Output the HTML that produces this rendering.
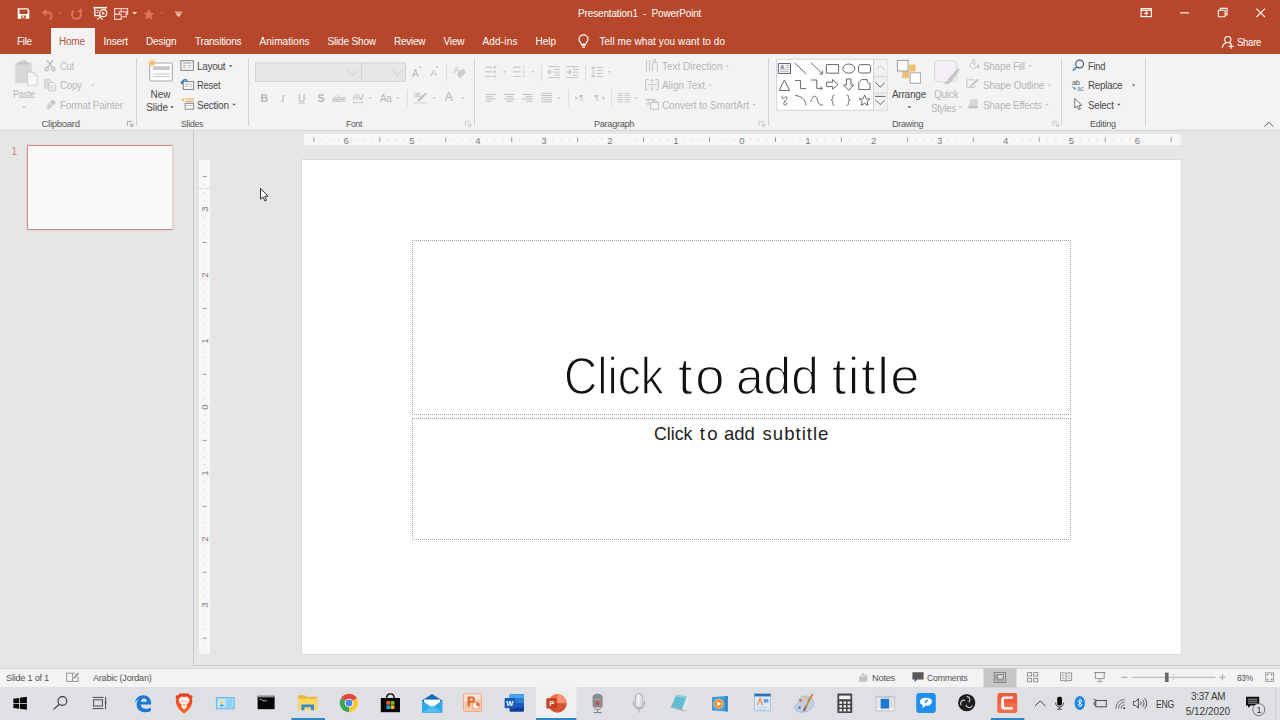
<!DOCTYPE html>
<html lang="en">
<head>
<meta charset="utf-8">
<title>Presentation1 - PowerPoint</title>
<style>
*{box-sizing:border-box;margin:0;padding:0}
html,body{width:1280px;height:720px;overflow:hidden;background:#e6e6e6;font-family:"Liberation Sans",sans-serif;font-size:10px;color:#444}
#app{position:absolute;left:0;top:0;width:1280px;height:720px;overflow:hidden}
.b{position:absolute}
.t{position:absolute;white-space:pre;line-height:1;font-family:"Liberation Sans",sans-serif}
svg.layer{position:absolute;left:0;top:0;width:1280px;height:720px;overflow:visible}
#titlebar{left:0;top:0;width:1280px;height:54px;background:#b7472a}
#hometab{left:50.5px;top:28.4px;width:44.5px;height:27px;background:#f3f3f3}
#ribbon{left:0;top:54px;width:1280px;height:76px;background:#f3f3f3}
#ribbonline{left:0;top:129px;width:1280px;height:2px;background:linear-gradient(#ececec 0,#ececec 50%,#d8d8d8 50%,#d8d8d8 100%)}
#work{left:0;top:131px;width:1280px;height:538px;background:#e6e6e6}
#status{left:0;top:669px;width:1280px;height:19px;background:#f3f3f3}
#taskbar{left:0;top:687px;width:1280px;height:33px;background:#dfe0e3}
.gsep{position:absolute;top:58px;width:1px;height:68px;background:#d0d0d0}
.grp{position:absolute;left:0;top:0;width:0;height:0;font-size:0}
.ph{border:1px dotted #a3a3a3}
.ssep{position:absolute;width:1px;background:#dcdcdc}
</style>
</head>
<body>
<div id="app">

<!-- ============ backgrounds ============ -->
<div class="b" id="titlebar"></div>
<div class="b" id="hometab"></div>
<div class="b" id="ribbon"></div>
<div class="b" id="ribbonline"></div>
<div class="b" id="work"></div>
<div class="b" id="status"></div>
<div class="b" id="taskbar"></div>

<!-- ============ work area ============ -->
<div class="b" style="left:193px;top:131px;width:1px;height:535px;background:#cacaca"></div>
<div class="b" style="left:194px;top:665px;width:1086px;height:1px;background:#cbcbcb"></div>
<div class="b" style="left:0;top:668px;width:1280px;height:1px;background:#d9d9d9"></div>
<div class="b" style="left:27.3px;top:145px;width:146.2px;height:85.4px;background:#fafafa;border:1.8px solid #d98a83;border-right-color:#f0cfcb;box-shadow:0 0 1.5px #e6b5b0"></div>
<div class="b" style="left:304px;top:134px;width:877px;height:11px;background:#f7f7f7"></div>
<div class="b" style="left:199px;top:160px;width:11px;height:494px;background:#f7f7f7"></div>
<div class="b" id="slide" style="left:301px;top:159px;width:881px;height:496px;background:#fff;border:1px solid #dadada"></div>
<svg class="layer" viewBox="0 0 1280 720">
<g stroke="#9a9a9a" stroke-width="1" fill="#a8a8a8">
<line x1="313.8" y1="137.4" x2="313.8" y2="141.9"/>
<rect x="321.5" y="139.3" width="0.9" height="0.9" stroke="none" fill="#bdbdbd"/>
<rect x="329.7" y="139.3" width="0.9" height="0.9" stroke="none" fill="#bdbdbd"/>
<rect x="338.0" y="139.3" width="0.9" height="0.9" stroke="none" fill="#bdbdbd"/>
<rect x="354.4" y="139.3" width="0.9" height="0.9" stroke="none" fill="#bdbdbd"/>
<rect x="362.7" y="139.3" width="0.9" height="0.9" stroke="none" fill="#bdbdbd"/>
<rect x="370.9" y="139.3" width="0.9" height="0.9" stroke="none" fill="#bdbdbd"/>
<line x1="379.8" y1="137.4" x2="379.8" y2="141.9"/>
<rect x="387.4" y="139.3" width="0.9" height="0.9" stroke="none" fill="#bdbdbd"/>
<rect x="395.7" y="139.3" width="0.9" height="0.9" stroke="none" fill="#bdbdbd"/>
<rect x="403.9" y="139.3" width="0.9" height="0.9" stroke="none" fill="#bdbdbd"/>
<rect x="420.4" y="139.3" width="0.9" height="0.9" stroke="none" fill="#bdbdbd"/>
<rect x="428.6" y="139.3" width="0.9" height="0.9" stroke="none" fill="#bdbdbd"/>
<rect x="436.9" y="139.3" width="0.9" height="0.9" stroke="none" fill="#bdbdbd"/>
<line x1="445.7" y1="137.4" x2="445.7" y2="141.9"/>
<rect x="453.4" y="139.3" width="0.9" height="0.9" stroke="none" fill="#bdbdbd"/>
<rect x="461.6" y="139.3" width="0.9" height="0.9" stroke="none" fill="#bdbdbd"/>
<rect x="469.9" y="139.3" width="0.9" height="0.9" stroke="none" fill="#bdbdbd"/>
<rect x="486.3" y="139.3" width="0.9" height="0.9" stroke="none" fill="#bdbdbd"/>
<rect x="494.6" y="139.3" width="0.9" height="0.9" stroke="none" fill="#bdbdbd"/>
<rect x="502.8" y="139.3" width="0.9" height="0.9" stroke="none" fill="#bdbdbd"/>
<line x1="511.7" y1="137.4" x2="511.7" y2="141.9"/>
<rect x="519.3" y="139.3" width="0.9" height="0.9" stroke="none" fill="#bdbdbd"/>
<rect x="527.6" y="139.3" width="0.9" height="0.9" stroke="none" fill="#bdbdbd"/>
<rect x="535.8" y="139.3" width="0.9" height="0.9" stroke="none" fill="#bdbdbd"/>
<rect x="552.3" y="139.3" width="0.9" height="0.9" stroke="none" fill="#bdbdbd"/>
<rect x="560.5" y="139.3" width="0.9" height="0.9" stroke="none" fill="#bdbdbd"/>
<rect x="568.8" y="139.3" width="0.9" height="0.9" stroke="none" fill="#bdbdbd"/>
<line x1="577.6" y1="137.4" x2="577.6" y2="141.9"/>
<rect x="585.3" y="139.3" width="0.9" height="0.9" stroke="none" fill="#bdbdbd"/>
<rect x="593.5" y="139.3" width="0.9" height="0.9" stroke="none" fill="#bdbdbd"/>
<rect x="601.8" y="139.3" width="0.9" height="0.9" stroke="none" fill="#bdbdbd"/>
<rect x="618.2" y="139.3" width="0.9" height="0.9" stroke="none" fill="#bdbdbd"/>
<rect x="626.5" y="139.3" width="0.9" height="0.9" stroke="none" fill="#bdbdbd"/>
<rect x="634.7" y="139.3" width="0.9" height="0.9" stroke="none" fill="#bdbdbd"/>
<line x1="643.6" y1="137.4" x2="643.6" y2="141.9"/>
<rect x="651.2" y="139.3" width="0.9" height="0.9" stroke="none" fill="#bdbdbd"/>
<rect x="659.5" y="139.3" width="0.9" height="0.9" stroke="none" fill="#bdbdbd"/>
<rect x="667.7" y="139.3" width="0.9" height="0.9" stroke="none" fill="#bdbdbd"/>
<rect x="684.2" y="139.3" width="0.9" height="0.9" stroke="none" fill="#bdbdbd"/>
<rect x="692.4" y="139.3" width="0.9" height="0.9" stroke="none" fill="#bdbdbd"/>
<rect x="700.7" y="139.3" width="0.9" height="0.9" stroke="none" fill="#bdbdbd"/>
<line x1="709.5" y1="137.4" x2="709.5" y2="141.9"/>
<rect x="717.2" y="139.3" width="0.9" height="0.9" stroke="none" fill="#bdbdbd"/>
<rect x="725.4" y="139.3" width="0.9" height="0.9" stroke="none" fill="#bdbdbd"/>
<rect x="733.7" y="139.3" width="0.9" height="0.9" stroke="none" fill="#bdbdbd"/>
<rect x="750.1" y="139.3" width="0.9" height="0.9" stroke="none" fill="#bdbdbd"/>
<rect x="758.4" y="139.3" width="0.9" height="0.9" stroke="none" fill="#bdbdbd"/>
<rect x="766.6" y="139.3" width="0.9" height="0.9" stroke="none" fill="#bdbdbd"/>
<line x1="775.5" y1="137.4" x2="775.5" y2="141.9"/>
<rect x="783.1" y="139.3" width="0.9" height="0.9" stroke="none" fill="#bdbdbd"/>
<rect x="791.4" y="139.3" width="0.9" height="0.9" stroke="none" fill="#bdbdbd"/>
<rect x="799.6" y="139.3" width="0.9" height="0.9" stroke="none" fill="#bdbdbd"/>
<rect x="816.1" y="139.3" width="0.9" height="0.9" stroke="none" fill="#bdbdbd"/>
<rect x="824.3" y="139.3" width="0.9" height="0.9" stroke="none" fill="#bdbdbd"/>
<rect x="832.6" y="139.3" width="0.9" height="0.9" stroke="none" fill="#bdbdbd"/>
<line x1="841.4" y1="137.4" x2="841.4" y2="141.9"/>
<rect x="849.1" y="139.3" width="0.9" height="0.9" stroke="none" fill="#bdbdbd"/>
<rect x="857.3" y="139.3" width="0.9" height="0.9" stroke="none" fill="#bdbdbd"/>
<rect x="865.6" y="139.3" width="0.9" height="0.9" stroke="none" fill="#bdbdbd"/>
<rect x="882.0" y="139.3" width="0.9" height="0.9" stroke="none" fill="#bdbdbd"/>
<rect x="890.3" y="139.3" width="0.9" height="0.9" stroke="none" fill="#bdbdbd"/>
<rect x="898.5" y="139.3" width="0.9" height="0.9" stroke="none" fill="#bdbdbd"/>
<line x1="907.4" y1="137.4" x2="907.4" y2="141.9"/>
<rect x="915.0" y="139.3" width="0.9" height="0.9" stroke="none" fill="#bdbdbd"/>
<rect x="923.3" y="139.3" width="0.9" height="0.9" stroke="none" fill="#bdbdbd"/>
<rect x="931.5" y="139.3" width="0.9" height="0.9" stroke="none" fill="#bdbdbd"/>
<rect x="948.0" y="139.3" width="0.9" height="0.9" stroke="none" fill="#bdbdbd"/>
<rect x="956.2" y="139.3" width="0.9" height="0.9" stroke="none" fill="#bdbdbd"/>
<rect x="964.5" y="139.3" width="0.9" height="0.9" stroke="none" fill="#bdbdbd"/>
<line x1="973.3" y1="137.4" x2="973.3" y2="141.9"/>
<rect x="981.0" y="139.3" width="0.9" height="0.9" stroke="none" fill="#bdbdbd"/>
<rect x="989.2" y="139.3" width="0.9" height="0.9" stroke="none" fill="#bdbdbd"/>
<rect x="997.5" y="139.3" width="0.9" height="0.9" stroke="none" fill="#bdbdbd"/>
<rect x="1013.9" y="139.3" width="0.9" height="0.9" stroke="none" fill="#bdbdbd"/>
<rect x="1022.2" y="139.3" width="0.9" height="0.9" stroke="none" fill="#bdbdbd"/>
<rect x="1030.4" y="139.3" width="0.9" height="0.9" stroke="none" fill="#bdbdbd"/>
<line x1="1039.3" y1="137.4" x2="1039.3" y2="141.9"/>
<rect x="1046.9" y="139.3" width="0.9" height="0.9" stroke="none" fill="#bdbdbd"/>
<rect x="1055.2" y="139.3" width="0.9" height="0.9" stroke="none" fill="#bdbdbd"/>
<rect x="1063.4" y="139.3" width="0.9" height="0.9" stroke="none" fill="#bdbdbd"/>
<rect x="1079.9" y="139.3" width="0.9" height="0.9" stroke="none" fill="#bdbdbd"/>
<rect x="1088.1" y="139.3" width="0.9" height="0.9" stroke="none" fill="#bdbdbd"/>
<rect x="1096.4" y="139.3" width="0.9" height="0.9" stroke="none" fill="#bdbdbd"/>
<line x1="1105.2" y1="137.4" x2="1105.2" y2="141.9"/>
<rect x="1112.9" y="139.3" width="0.9" height="0.9" stroke="none" fill="#bdbdbd"/>
<rect x="1121.1" y="139.3" width="0.9" height="0.9" stroke="none" fill="#bdbdbd"/>
<rect x="1129.4" y="139.3" width="0.9" height="0.9" stroke="none" fill="#bdbdbd"/>
<rect x="1145.8" y="139.3" width="0.9" height="0.9" stroke="none" fill="#bdbdbd"/>
<rect x="1154.1" y="139.3" width="0.9" height="0.9" stroke="none" fill="#bdbdbd"/>
<rect x="1162.3" y="139.3" width="0.9" height="0.9" stroke="none" fill="#bdbdbd"/>
<line x1="1171.2" y1="137.4" x2="1171.2" y2="141.9"/>
<rect x="1178.8" y="139.3" width="0.9" height="0.9" stroke="none" fill="#bdbdbd"/>
<rect x="204.1" y="167.5" width="0.9" height="0.9" stroke="none" fill="#bdbdbd"/>
<line x1="202.6" y1="176.6" x2="206.8" y2="176.6"/>
<rect x="204.1" y="184.0" width="0.9" height="0.9" stroke="none" fill="#bdbdbd"/>
<rect x="204.1" y="192.2" width="0.9" height="0.9" stroke="none" fill="#bdbdbd"/>
<rect x="204.1" y="200.5" width="0.9" height="0.9" stroke="none" fill="#bdbdbd"/>
<rect x="204.1" y="216.9" width="0.9" height="0.9" stroke="none" fill="#bdbdbd"/>
<rect x="204.1" y="225.2" width="0.9" height="0.9" stroke="none" fill="#bdbdbd"/>
<rect x="204.1" y="233.4" width="0.9" height="0.9" stroke="none" fill="#bdbdbd"/>
<line x1="202.6" y1="242.5" x2="206.8" y2="242.5"/>
<rect x="204.1" y="249.9" width="0.9" height="0.9" stroke="none" fill="#bdbdbd"/>
<rect x="204.1" y="258.2" width="0.9" height="0.9" stroke="none" fill="#bdbdbd"/>
<rect x="204.1" y="266.4" width="0.9" height="0.9" stroke="none" fill="#bdbdbd"/>
<rect x="204.1" y="282.9" width="0.9" height="0.9" stroke="none" fill="#bdbdbd"/>
<rect x="204.1" y="291.1" width="0.9" height="0.9" stroke="none" fill="#bdbdbd"/>
<rect x="204.1" y="299.4" width="0.9" height="0.9" stroke="none" fill="#bdbdbd"/>
<line x1="202.6" y1="308.5" x2="206.8" y2="308.5"/>
<rect x="204.1" y="315.9" width="0.9" height="0.9" stroke="none" fill="#bdbdbd"/>
<rect x="204.1" y="324.1" width="0.9" height="0.9" stroke="none" fill="#bdbdbd"/>
<rect x="204.1" y="332.4" width="0.9" height="0.9" stroke="none" fill="#bdbdbd"/>
<rect x="204.1" y="348.8" width="0.9" height="0.9" stroke="none" fill="#bdbdbd"/>
<rect x="204.1" y="357.1" width="0.9" height="0.9" stroke="none" fill="#bdbdbd"/>
<rect x="204.1" y="365.3" width="0.9" height="0.9" stroke="none" fill="#bdbdbd"/>
<line x1="202.6" y1="374.4" x2="206.8" y2="374.4"/>
<rect x="204.1" y="381.8" width="0.9" height="0.9" stroke="none" fill="#bdbdbd"/>
<rect x="204.1" y="390.1" width="0.9" height="0.9" stroke="none" fill="#bdbdbd"/>
<rect x="204.1" y="398.3" width="0.9" height="0.9" stroke="none" fill="#bdbdbd"/>
<rect x="204.1" y="414.8" width="0.9" height="0.9" stroke="none" fill="#bdbdbd"/>
<rect x="204.1" y="423.0" width="0.9" height="0.9" stroke="none" fill="#bdbdbd"/>
<rect x="204.1" y="431.3" width="0.9" height="0.9" stroke="none" fill="#bdbdbd"/>
<line x1="202.6" y1="440.4" x2="206.8" y2="440.4"/>
<rect x="204.1" y="447.8" width="0.9" height="0.9" stroke="none" fill="#bdbdbd"/>
<rect x="204.1" y="456.0" width="0.9" height="0.9" stroke="none" fill="#bdbdbd"/>
<rect x="204.1" y="464.3" width="0.9" height="0.9" stroke="none" fill="#bdbdbd"/>
<rect x="204.1" y="480.7" width="0.9" height="0.9" stroke="none" fill="#bdbdbd"/>
<rect x="204.1" y="489.0" width="0.9" height="0.9" stroke="none" fill="#bdbdbd"/>
<rect x="204.1" y="497.2" width="0.9" height="0.9" stroke="none" fill="#bdbdbd"/>
<line x1="202.6" y1="506.3" x2="206.8" y2="506.3"/>
<rect x="204.1" y="513.7" width="0.9" height="0.9" stroke="none" fill="#bdbdbd"/>
<rect x="204.1" y="522.0" width="0.9" height="0.9" stroke="none" fill="#bdbdbd"/>
<rect x="204.1" y="530.2" width="0.9" height="0.9" stroke="none" fill="#bdbdbd"/>
<rect x="204.1" y="546.7" width="0.9" height="0.9" stroke="none" fill="#bdbdbd"/>
<rect x="204.1" y="554.9" width="0.9" height="0.9" stroke="none" fill="#bdbdbd"/>
<rect x="204.1" y="563.2" width="0.9" height="0.9" stroke="none" fill="#bdbdbd"/>
<line x1="202.6" y1="572.3" x2="206.8" y2="572.3"/>
<rect x="204.1" y="579.7" width="0.9" height="0.9" stroke="none" fill="#bdbdbd"/>
<rect x="204.1" y="587.9" width="0.9" height="0.9" stroke="none" fill="#bdbdbd"/>
<rect x="204.1" y="596.2" width="0.9" height="0.9" stroke="none" fill="#bdbdbd"/>
<rect x="204.1" y="612.6" width="0.9" height="0.9" stroke="none" fill="#bdbdbd"/>
<rect x="204.1" y="620.9" width="0.9" height="0.9" stroke="none" fill="#bdbdbd"/>
<rect x="204.1" y="629.1" width="0.9" height="0.9" stroke="none" fill="#bdbdbd"/>
<line x1="202.6" y1="638.2" x2="206.8" y2="638.2"/>
<rect x="204.1" y="645.6" width="0.9" height="0.9" stroke="none" fill="#bdbdbd"/>
</g>
<line x1="197" y1="188.5" x2="211" y2="188.5" stroke="#c9c9c9" stroke-width="1" stroke-dasharray="1.2 1.2"/>
<path d="M260.5 188.3 L260.5 199.2 L263 196.9 L264.9 201 L266.5 200.3 L264.7 196.3 L268 196.2 Z" fill="#fff" stroke="#222" stroke-width="0.9" stroke-linejoin="round"/>
</svg>
<div class="t rd" style="left:341.1px;top:136px;width:10px;text-align:center;font-size:9.5px;color:#787878">6</div>
<div class="t rd" style="left:407.0px;top:136px;width:10px;text-align:center;font-size:9.5px;color:#787878">5</div>
<div class="t rd" style="left:473.0px;top:136px;width:10px;text-align:center;font-size:9.5px;color:#787878">4</div>
<div class="t rd" style="left:538.9px;top:136px;width:10px;text-align:center;font-size:9.5px;color:#787878">3</div>
<div class="t rd" style="left:604.9px;top:136px;width:10px;text-align:center;font-size:9.5px;color:#787878">2</div>
<div class="t rd" style="left:670.8px;top:136px;width:10px;text-align:center;font-size:9.5px;color:#787878">1</div>
<div class="t rd" style="left:736.8px;top:136px;width:10px;text-align:center;font-size:9.5px;color:#787878">0</div>
<div class="t rd" style="left:802.8px;top:136px;width:10px;text-align:center;font-size:9.5px;color:#787878">1</div>
<div class="t rd" style="left:868.7px;top:136px;width:10px;text-align:center;font-size:9.5px;color:#787878">2</div>
<div class="t rd" style="left:934.6px;top:136px;width:10px;text-align:center;font-size:9.5px;color:#787878">3</div>
<div class="t rd" style="left:1000.6px;top:136px;width:10px;text-align:center;font-size:9.5px;color:#787878">4</div>
<div class="t rd" style="left:1066.5px;top:136px;width:10px;text-align:center;font-size:9.5px;color:#787878">5</div>
<div class="t rd" style="left:1132.5px;top:136px;width:10px;text-align:center;font-size:9.5px;color:#787878">6</div>
<div class="t rd" style="left:199.6px;top:204.1px;width:10px;height:10px;text-align:center;font-size:9.5px;color:#787878;transform:rotate(-90deg);transform-origin:50% 50%">3</div>
<div class="t rd" style="left:199.6px;top:270.1px;width:10px;height:10px;text-align:center;font-size:9.5px;color:#787878;transform:rotate(-90deg);transform-origin:50% 50%">2</div>
<div class="t rd" style="left:199.6px;top:336.1px;width:10px;height:10px;text-align:center;font-size:9.5px;color:#787878;transform:rotate(-90deg);transform-origin:50% 50%">1</div>
<div class="t rd" style="left:199.6px;top:402.0px;width:10px;height:10px;text-align:center;font-size:9.5px;color:#787878;transform:rotate(-90deg);transform-origin:50% 50%">0</div>
<div class="t rd" style="left:199.6px;top:467.9px;width:10px;height:10px;text-align:center;font-size:9.5px;color:#787878;transform:rotate(-90deg);transform-origin:50% 50%">1</div>
<div class="t rd" style="left:199.6px;top:533.9px;width:10px;height:10px;text-align:center;font-size:9.5px;color:#787878;transform:rotate(-90deg);transform-origin:50% 50%">2</div>
<div class="t rd" style="left:199.6px;top:599.9px;width:10px;height:10px;text-align:center;font-size:9.5px;color:#787878;transform:rotate(-90deg);transform-origin:50% 50%">3</div>
<div class="b ph" style="left:412px;top:240px;width:659px;height:175px"></div>
<div class="b ph" style="left:412px;top:418px;width:659px;height:122px"></div>


<!-- ============ icon layers ============ -->
<svg class="layer" viewBox="0 0 1280 720" fill="none" stroke-linecap="butt">
<!-- save -->
<path d="M17.7 8.3 H27.6 L29.3 10 V18.7 H17.7 Z" fill="#fff"/>
<rect x="19.5" y="9.5" width="8.1" height="4.5" fill="#b7472a"/>
<rect x="21.3" y="15.4" width="4.6" height="3.3" fill="#b7472a"/>
<rect x="22.6" y="15.4" width="1.6" height="2.2" fill="#fff"/>
<!-- undo (disabled) -->
<path d="M46.4 9 L41.4 12.6 L46.4 16.2 Z" fill="#e0745c"/>
<path d="M45 12.6 H48 C51.6 12.6 52.4 16 50.6 19" stroke="#e0745c" stroke-width="2" stroke-linecap="round"/>
<path d="M58.4 12.2 h3.4 l-1.7 1.9 z" fill="#d9745c"/>
<!-- redo (disabled) -->
<path d="M79.6 11.2 A4.5 4.5 0 1 1 73.8 10.8" stroke="#e0745c" stroke-width="1.8"/>
<path d="M77.4 11.8 L82 12 L81.6 7.8 Z" fill="#e0745c"/>
<!-- start from beginning -->
<g stroke="#fff" stroke-width="1.2">
<path d="M93.3 7.7 H107" stroke-width="1.5"/>
<path d="M94.9 8.4 V15.6 H99.5 M105.1 8.4 V9.6"/>
<path d="M100 15.8 V17.6 M97.2 19.4 L100 17.4 L102.8 19.4" stroke-width="1.1"/>
<circle cx="103.2" cy="13.2" r="3.5" fill="#b7472a"/>
<path d="M102.1 11.5 L105 13.2 L102.1 14.9 Z" fill="#fff" stroke="none"/>
<path d="M96.6 10.6 H99 M96.6 12.6 H98.4" stroke-width="0.9"/>
</g>
<!-- slide layout -->
<g stroke="#edcfbf" stroke-width="1.2" fill="#bf3f36">
<rect x="114.6" y="8.6" width="13" height="5.6"/>
<path d="M121.2 8.6 V14.2" fill="none"/>
<rect x="119.6" y="11.8" width="6.6" height="5"/>
<rect x="114.6" y="14.4" width="6.6" height="5"/>
</g>
<path d="M132.2 12 h5 l-2.5 2.4 z" fill="#ffeab8"/>
<!-- star (disabled) -->
<path d="M148.9 9 L150.5 12.8 L154.4 13.1 L151.4 15.6 L152.4 19.7 L148.9 17.5 L145.4 19.7 L146.4 15.6 L143.4 13.1 L147.3 12.8 Z" fill="#e0745c"/>
<path d="M160.2 12.2 h3.2 l-1.6 1.8 z" fill="#d9745c"/>
<!-- customise QAT -->
<path d="M175 12.2 H182.2" stroke="#f7d3c8" stroke-width="1"/>
<path d="M176 13.8 H181.2 L178.6 16.8 Z" fill="#f3c3b4" stroke="#f7d3c8" stroke-width="0.6"/>
<!-- light bulb -->
<g stroke="#fff" stroke-width="1.15">
<path d="M581.3 44.3 C581.3 42.6 579 41.6 579 39.4 A4.5 4.5 0 0 1 588 39.4 C588 41.6 585.7 42.6 585.7 44.3 Z"/>
<path d="M581.6 45.8 H585.4 M582 47.3 H585" stroke-width="1.1"/>
</g>
<!-- ribbon display options -->
<g stroke="#fff" stroke-width="1.1">
<rect x="1141.1" y="8.6" width="10.3" height="8"/>
<path d="M1141.1 10.2 H1151.4" stroke-width="1.3"/>
<path d="M1146.3 15.6 V12.2 M1144.5 13.8 L1146.3 12 L1148.1 13.8"/>
</g>
<!-- minimise / restore / close -->
<path d="M1180 12.9 H1189" stroke="#fff" stroke-width="1.1"/>
<g stroke="#fff" stroke-width="1.1">
<rect x="1218.3" y="10.2" width="6.8" height="6.6" rx="0.8"/>
<path d="M1220.3 10 V8.4 H1227 V15 H1225.3"/>
</g>
<path d="M1256.4 8.6 L1265 17.1 M1265 8.6 L1256.4 17.1" stroke="#fff" stroke-width="1.15"/>
<!-- share -->
<g stroke="#fff" stroke-width="1.1">
<circle cx="1227.8" cy="39.6" r="3.1"/>
<path d="M1222.3 48 C1222.6 45 1224.4 43.4 1226.2 42.9 M1229.6 43 C1230.4 43.3 1231 43.7 1231.5 44.2"/>
<path d="M1228.6 46.4 H1233.6 M1231.1 44 V48.8" stroke-width="1.2"/>
</g>
</svg>

<svg class="layer" viewBox="0 0 1280 720" fill="none">
<rect x="136" y="58" width="1" height="68" fill="#d3d3d3"/>
<rect x="248" y="58" width="1" height="68" fill="#d3d3d3"/>
<rect x="474" y="58" width="1" height="68" fill="#d3d3d3"/>
<rect x="768" y="58" width="1" height="68" fill="#d3d3d3"/>
<rect x="1061" y="58" width="1" height="68" fill="#d3d3d3"/>
<rect x="1145" y="58" width="1" height="68" fill="#d3d3d3"/>
<rect x="446" y="64.6" width="1" height="16.9" fill="#dedede"/>
<rect x="407" y="89.6" width="1" height="16.4" fill="#dedede"/>
<rect x="541" y="64.6" width="1" height="16.9" fill="#dedede"/>
<rect x="585" y="64.6" width="1" height="16.9" fill="#dedede"/>
<rect x="568" y="89.6" width="1" height="16.4" fill="#dedede"/>
<rect x="611" y="89.6" width="1" height="16.4" fill="#dedede"/>
<g>
<rect x="15.2" y="62.6" width="16.6" height="20.6" rx="0.8" fill="#d8d8d8"/>
<path d="M18.6 64.6 V61.8 H21.6 V60 H25.4 V61.8 H28.4 V64.6 Z" fill="#c4c4c4"/>
<rect x="22.7" y="60.9" width="1.6" height="1.4" fill="#eeeeee"/>
<path d="M27.6 72.2 H34 L37.2 75.4 V85.2 H27.6 Z" fill="#f8f8f8" stroke="#cdcdcd" stroke-width="0.9"/>
<path d="M33.8 72.4 V75.6 H37" stroke="#cdcdcd" stroke-width="0.8"/>
</g>
<path d="M22.30 106.25 h3.40 l-1.70 1.90 z" fill="#c3c3c3"/>
<g stroke="#bcbcbc" stroke-width="1.35">
<path d="M46.9 60.2 L52.7 67.6 M53.1 60.2 L47.3 67.6"/>
<circle cx="46.7" cy="69" r="1.7"/><circle cx="53.3" cy="69" r="1.7"/>
</g>
<g stroke="#c3c3c3" stroke-width="0.9">
<path d="M44.6 79.4 H49.4 L51 81 V82 M44.6 79.4 V88 H48.4" fill="none"/>
<rect x="44.8" y="79.6" width="4" height="8" fill="#dcdcdc" stroke="none"/>
<path d="M49 82.6 H53.4 L55.6 84.8 V90.8 H49 Z" fill="#f8f8f8"/>
<path d="M50.4 85.6 H54.2 M50.4 87.2 H54.2 M50.4 88.8 H54.2" stroke-width="0.7"/>
</g>
<path d="M91.40 84.50 h3.20 l-1.60 1.80 z" fill="#c3c3c3"/>
<g fill="#c3c3c3">
<path d="M52.6 99.6 L55.8 102.8 L53.4 105.2 L50.2 102 Z"/>
<path d="M49.6 102.6 L52.8 105.8 L49.6 109 C48.2 109.4 46.6 108.8 46.2 108 C47.6 107.6 47.6 106.2 47.2 105 Z" fill="#d0d0d0"/>
</g>
<path d="M127.4 126 V121.4 H132.0" stroke="#a2a2a2" stroke-width="0.9"/>
<path d="M129.6 123.2 L132.6 126 M130.2 126.1 H132.9 V123.4" stroke="#8e8e8e" stroke-width="0.9"/>
<rect x="149.7" y="63" width="22.6" height="18" rx="1.4" fill="#fdfdfd" stroke="#adadad" stroke-width="1.1"/>
<rect x="153" y="66.2" width="16.8" height="3.8" fill="#c6c6c6"/>
<path d="M154.6 74 H169.6 M154.6 76.6 H169.6" stroke="#bdbdbd" stroke-width="0.9"/>
<path d="M152.4 74 H153.6 M152.4 76.6 H153.6" stroke="#c8c8c8" stroke-width="0.9"/>
<path d="M152 58.2 L152.7 61.3 L155.4 59.6 L153.7 62.3 L156.8 63 L153.7 63.7 L155.4 66.4 L152.7 64.7 L152 67.8 L151.3 64.7 L148.6 66.4 L150.3 63.7 L147.2 63 L150.3 62.3 L148.6 59.6 L151.3 61.3 Z" fill="#f5c06a"/>
<path d="M170.20 106.20 h3.60 l-1.80 2.00 z" fill="#555"/>
<g stroke="#7c7c7c" stroke-width="1">
<rect x="180.9" y="60.7" width="12.4" height="9.6" fill="#fcfcfc"/>
<path d="M182.8 63 H191.4" stroke="#9a9a9a"/>
<path d="M182.8 65.4 H186.2 M182.8 67.4 H186.2 M188 65.4 H191.4 M188 67.4 H190.4" stroke="#a8a8a8" stroke-width="0.9"/>
</g>
<path d="M228.90 65.25 h3.40 l-1.70 1.90 z" fill="#555"/>
<g>
<rect x="183.2" y="81.6" width="10.4" height="7.8" fill="#fcfcfc" stroke="#7c7c7c" stroke-width="1"/>
<path d="M185 84.2 H192 M185 86.4 H188 M189.4 86.4 H192" stroke="#b0b0b0" stroke-width="0.9"/>
<path d="M181.6 83.4 C181.6 80 185 78.8 187.4 80.6" stroke="#2e75b6" stroke-width="1.3"/>
<path d="M180.4 81.8 L181.7 84.6 L183.9 82.6 Z" fill="#2e75b6"/>
</g>
<g>
<rect x="181.8" y="98.6" width="2.4" height="2.4" fill="#f3b75b"/>
<path d="M185.6 99 H193.8" stroke="#f3b75b" stroke-width="1.3"/>
<path d="M185.6 101.4 H193.8" stroke="#e08a7c" stroke-width="1"/>
<rect x="185.2" y="103.4" width="8.4" height="5.8" fill="#fcfcfc" stroke="#8a8a8a" stroke-width="1"/>
<path d="M185.2 105.6 H193.6" stroke="#b5b5b5" stroke-width="0.8"/>
</g>
<path d="M232.30 103.85 h3.40 l-1.70 1.90 z" fill="#555"/>
<rect x="255.5" y="63" width="106" height="18.4" fill="#e6e6e6" stroke="#d2d2d2" stroke-width="1"/>
<rect x="361.5" y="63" width="44" height="18.4" fill="#e6e6e6" stroke="#d2d2d2" stroke-width="1"/>
<path d="M347.8 70.2 L352.9 75.4 L358 70.2" stroke="#cbcbcb" stroke-width="1"/>
<path d="M392 70.2 L397.1 75.4 L402.2 70.2" stroke="#cbcbcb" stroke-width="1"/>
<path d="M298 103.2 H305" stroke="#c3c3c3" stroke-width="1"/>
<path d="M332.2 99.3 H346.2" stroke="#c3c3c3" stroke-width="0.8"/>
<path d="M353.6 102.6 H362.8 M354.8 101.4 L353.4 102.6 L354.8 103.8 M361.6 101.4 L363 102.6 L361.6 103.8" stroke="#c3c3c3" stroke-width="0.8"/>
<path d="M368.50 97.35 h3.00 l-1.50 1.70 z" fill="#bfbfbf"/>
<path d="M396.50 97.35 h3.00 l-1.50 1.70 z" fill="#bfbfbf"/>
<path d="M418.3 68 L419.9 66 L421.5 68 Z" fill="#c3c3c3"/>
<path d="M435.6 66.2 L437.2 68.2 L438.8 66.2 Z" fill="#c3c3c3"/>
<path d="M459.6 71 L463.4 68.4 L466 72.2 L460.2 78.4 L456.8 74.8 Z" fill="#cdcdcd"/>
<path d="M425.4 92.4 L427 94 L419.6 101 L417.4 101.4 L418 99.2 Z" fill="#c3c3c3"/>
<rect x="413.8" y="102.2" width="13" height="1.6" fill="#dedede"/>
<path d="M432.50 97.35 h3.00 l-1.50 1.70 z" fill="#bfbfbf"/>
<path d="M461.00 97.35 h3.00 l-1.50 1.70 z" fill="#bfbfbf"/>
<path d="M465.4 126 V121.4 H470.0" stroke="#c4c4c4" stroke-width="0.9"/>
<path d="M467.6 123.2 L470.6 126 M468.2 126.1 H470.9 V123.4" stroke="#bcbcbc" stroke-width="0.9"/>
<g stroke="#c3c3c3" stroke-width="1">
<path d="M485 67.2 H492"/>
<rect x="493.6" y="66.2" width="2" height="2" fill="#c3c3c3" stroke="none"/>
<path d="M485 71.8 H492"/>
<rect x="493.6" y="70.8" width="2" height="2" fill="#c3c3c3" stroke="none"/>
<path d="M485 76.4 H492"/>
<rect x="493.6" y="75.4" width="2" height="2" fill="#c3c3c3" stroke="none"/>
<path d="M513 67.2 H520.6"/>
<path d="M524 65.6 V68.8" stroke-width="0.9"/>
<path d="M513 71.8 H520.6"/>
<path d="M524 70.2 V73.4" stroke-width="0.9"/>
<path d="M513 76.4 H520.6"/>
<path d="M524 74.8 V78.0" stroke-width="0.9"/>
<path d="M548 66.6 H560" stroke="#bfbfbf" stroke-width="0.9"/>
<path d="M554.4 69.4 H560" stroke="#bfbfbf" stroke-width="0.9"/>
<path d="M554.4 72.2 H560" stroke="#bfbfbf" stroke-width="0.9"/>
<path d="M554.4 75.0 H560" stroke="#bfbfbf" stroke-width="0.9"/>
<path d="M548 77.6 H560" stroke="#bfbfbf" stroke-width="0.9"/>
<path d="M553.2 72 H548.4 M550.6 69.6 L548.2 72 L550.6 74.4" stroke-width="1.2"/>
<path d="M566 66.6 H578.4" stroke="#bfbfbf" stroke-width="0.9"/>
<path d="M572.8 69.4 H578.4" stroke="#bfbfbf" stroke-width="0.9"/>
<path d="M572.8 72.2 H578.4" stroke="#bfbfbf" stroke-width="0.9"/>
<path d="M572.8 75.0 H578.4" stroke="#bfbfbf" stroke-width="0.9"/>
<path d="M566 77.6 H578.4" stroke="#bfbfbf" stroke-width="0.9"/>
<path d="M566.2 72 H571 M568.8 69.6 L571.2 72 L568.8 74.4" stroke-width="1.2"/>
<path d="M593.2 67 V77 M591.2 69 L593.2 66.8 L595.2 69 M591.2 75 L593.2 77.2 L595.2 75" stroke-width="1"/>
<path d="M596.8 67.4 H603"/>
<path d="M596.8 70.4 H603"/>
<path d="M596.8 73.4 H603"/>
<path d="M596.8 76.4 H603"/>
<path d="M485.6 94.4 H495.6" stroke="#bfbfbf"/>
<path d="M485.6 96.7 H492.6" stroke="#bfbfbf"/>
<path d="M485.6 99.0 H495.6" stroke="#bfbfbf"/>
<path d="M485.6 101.3 H491.6" stroke="#bfbfbf"/>
<path d="M504.0 94.4 H514.8" stroke="#bfbfbf"/>
<path d="M505.8 96.7 H513.0" stroke="#bfbfbf"/>
<path d="M504.0 99.0 H514.8" stroke="#bfbfbf"/>
<path d="M506.4 101.3 H512.4" stroke="#bfbfbf"/>
<path d="M522.6 94.4 H532.6" stroke="#bfbfbf"/>
<path d="M525.6 96.7 H532.6" stroke="#bfbfbf"/>
<path d="M522.6 99.0 H532.6" stroke="#bfbfbf"/>
<path d="M526.6 101.3 H532.6" stroke="#bfbfbf"/>
<path d="M541.2 93.4 H552" stroke="#bdbdbd" stroke-width="0.9"/>
<path d="M541.2 95.5 H552" stroke="#bdbdbd" stroke-width="0.9"/>
<path d="M541.2 97.6 H552" stroke="#bdbdbd" stroke-width="0.9"/>
<path d="M541.2 99.7 H552" stroke="#bdbdbd" stroke-width="0.9"/>
<path d="M541.2 101.8 H552" stroke="#bdbdbd" stroke-width="0.9"/>
<path d="M617.8 93.4 H623 M624.6 93.4 H629.8" stroke="#c4c4c4" stroke-width="0.9"/>
<path d="M617.8 95.5 H623 M624.6 95.5 H629.8" stroke="#c4c4c4" stroke-width="0.9"/>
<path d="M617.8 97.6 H623 M624.6 97.6 H629.8" stroke="#c4c4c4" stroke-width="0.9"/>
<path d="M617.8 99.7 H623 M624.6 99.7 H629.8" stroke="#c4c4c4" stroke-width="0.9"/>
<path d="M617.8 101.8 H623 M624.6 101.8 H629.8" stroke="#c4c4c4" stroke-width="0.9"/>
</g>
<path d="M502.90 71.35 h3.00 l-1.50 1.70 z" fill="#bfbfbf"/>
<path d="M531.50 71.35 h3.00 l-1.50 1.70 z" fill="#bfbfbf"/>
<path d="M607.90 71.35 h3.00 l-1.50 1.70 z" fill="#bfbfbf"/>
<path d="M557.00 97.35 h3.00 l-1.50 1.70 z" fill="#bfbfbf"/>
<path d="M634.50 97.35 h3.00 l-1.50 1.70 z" fill="#bfbfbf"/>
<path d="M575.2 96 L577.6 98 L575.2 100 Z" fill="#c3c3c3"/>
<path d="M604.2 96 L601.8 98 L604.2 100 Z" fill="#c3c3c3"/>
<g stroke="#c3c3c3" stroke-width="1">
<path d="M646.4 60 V71.4 M649.6 60 V71.4 M652.6 64 V71.4 M657.2 64 V71.4"/>
</g>
<g stroke="#c3c3c3" stroke-width="1">
<path d="M648.4 79.6 H645.6 V89.8 H648.4 M655.4 79.6 H658.2 V89.8 H655.4"/>
<path d="M647.6 84.7 H656.2" stroke-width="0.9"/>
<path d="M651.9 79.4 V83 M650.2 81 L651.9 79.2 L653.6 81 M651.9 90 V86.4 M650.2 88.4 L651.9 90.2 L653.6 88.4" stroke-width="0.9"/>
</g>
<g stroke="#c3c3c3" stroke-width="1">
<path d="M645.4 99.6 H655.6" stroke-width="1.3"/>
<path d="M648.2 100 V104.6 M646 103 L648.2 105 L650.2 103" stroke-width="0.9"/>
<rect x="650.6" y="102.6" width="7.8" height="6.6" fill="#f6f6f6"/>
<path d="M652 101.2 H657.4" stroke-width="0.9"/>
</g>
<path d="M725.90 65.30 h3.20 l-1.60 1.80 z" fill="#bfbfbf"/>
<path d="M708.40 84.50 h3.20 l-1.60 1.80 z" fill="#bfbfbf"/>
<path d="M752.40 103.90 h3.20 l-1.60 1.80 z" fill="#bfbfbf"/>
<path d="M759.2 126 V121.4 H763.8" stroke="#c4c4c4" stroke-width="0.9"/>
<path d="M761.4 123.2 L764.4 126 M762.0 126.1 H764.7 V123.4" stroke="#bcbcbc" stroke-width="0.9"/>
<rect x="776.5" y="59.3" width="110.6" height="51" fill="#fff" stroke="#d5d5d5" stroke-width="1"/>
<rect x="873.5" y="59.8" width="13.2" height="50" fill="#f1f1f1"/>
<path d="M873.5 59.8 V109.8 M873.5 76.6 H886.8 M873.5 93.2 H886.8" stroke="#d0d0d0" stroke-width="1"/>
<path d="M875.6 70.2 L880.2 65.6 L884.8 70.2" stroke="#c9c9c9" stroke-width="1"/>
<path d="M875.6 82.6 L880.2 87.2 L884.8 82.6" stroke="#666" stroke-width="1"/>
<path d="M875 96.4 H885.4" stroke="#666" stroke-width="1"/>
<path d="M875.6 100 L880.2 104.6 L884.8 100" stroke="#666" stroke-width="1"/>
<g stroke="#5f5f5f" stroke-width="0.95" stroke-linejoin="round">
<rect x="778.3" y="63.6" width="12.2" height="9.8" stroke="#4b4b7a"/>
<path d="M785.4 65.6 H789 M785.4 67.4 H789 M780 69.4 H789 M780 71.4 H789" stroke="#9a9a9a" stroke-width="0.7"/>
<path d="M794.6 62.8 L806.4 74.2"/>
<path d="M811 62.8 L822.4 73.8 M822.6 70.8 V74 H819.4"/>
<rect x="826.4" y="64.6" width="12.2" height="8.6"/>
<ellipse cx="848.8" cy="68.6" rx="6" ry="4.6"/>
<rect x="858.6" y="64.6" width="12" height="8.4" rx="2"/>
<path d="M784.4 80 L789.6 90.4 H779.2 Z"/>
<path d="M795 80.6 H800.6 V88.6 H806.2"/>
<path d="M811.2 80 H816.8 V88.4 H822 M820.4 86.6 L822.4 88.4 L820.4 90.2"/>
<path d="M826.6 82.2 H832.6 V79.6 L838 84.4 L832.6 89.2 V86.6 H826.6 Z"/>
<path d="M846.4 79 H851 V85 H853.8 L848.7 90.4 L843.6 85 H846.4 Z"/>
<path d="M858.8 82.4 L861.6 79.6 H867.4 A2.6 2.6 0 0 0 870 83.4 V89.6 H858.8 Z"/>
<path d="M782.6 95.8 C780.6 98 783 99 784.6 97.6 C786.8 95.6 788 97.4 786 99.6 C784 101.8 782.6 104.6 785 105 C787 105.2 787.4 103 785.6 102.6"/>
<path d="M795 95.6 C801 95.6 805.4 99.4 806 105.4"/>
<path d="M810.8 102 C813 94.6 816 94.6 817.4 100 C818.8 105.4 821 105.6 823 104.6"/>
<path d="M834.6 95 C832.4 95 832.8 96.4 832.8 97.8 C832.8 99.2 832.6 100 831 100.2 C832.6 100.4 832.8 101.2 832.8 102.6 C832.8 104 832.4 105.4 834.6 105.4"/>
<path d="M846.6 95 C848.8 95 848.4 96.4 848.4 97.8 C848.4 99.2 848.6 100 850.2 100.2 C848.6 100.4 848.4 101.2 848.4 102.6 C848.4 104 848.8 105.4 846.6 105.4"/>
<path d="M864.6 95 L866.1 98.7 L870 99 L867 101.5 L868 105.4 L864.6 103.3 L861.2 105.4 L862.2 101.5 L859.2 99 L863.1 98.7 Z"/>
</g>
<rect x="909" y="64.6" width="6.6" height="7" fill="#f0c26c"/>
<rect x="902.2" y="71.2" width="7" height="7" fill="#ecc172"/>
<rect x="897.4" y="60.4" width="10.6" height="10.6" fill="#fdfdfd" stroke="#9a9a9a" stroke-width="1"/>
<rect x="910.2" y="72.8" width="10.2" height="10.4" fill="#fdfdfd" stroke="#a6a6a6" stroke-width="1"/>
<path d="M907.60 106.20 h3.60 l-1.80 2.00 z" fill="#555"/>
<rect x="934.6" y="60.6" width="22.2" height="21.2" rx="4" fill="#f4eff6" stroke="#d6d6d6" stroke-width="1"/>
<path d="M957.6 68.4 L959.6 70 L951.4 81.8 L947.6 79.4 Z" fill="#c6c6c6"/>
<path d="M948.2 80 L950.4 82 C948.6 84.4 945.6 84.6 942.8 84.2 C945.4 83.6 946.2 81.6 948.2 80 Z" fill="#c2c2c2"/>
<path d="M958.40 106.30 h3.20 l-1.60 1.80 z" fill="#bfbfbf"/>
<g stroke="#c3c3c3" stroke-width="0.95">
<path d="M972.2 62.8 L976.8 67.4 L973.4 69 L969.2 65.4 Z" fill="#f5f5f5"/>
<path d="M972.6 63.2 V60.4 C972.6 58.8 974.8 58.8 974.8 60.4 V64"/>
<path d="M977.8 64.6 C979.4 66.2 979.6 67.4 978.6 68 C977.6 67.6 977.4 66 977.8 64.6 Z" fill="#c3c3c3"/>
</g>
<g stroke="#c3c3c3" stroke-width="1">
<path d="M974.6 79.8 H966.8 V87.4 H974.8 V85"/>
<path d="M977.6 78.6 L979 80 L971.8 86.4 L970 86.8 L970.6 85 Z" fill="#c3c3c3" stroke="none"/>
</g>
<path d="M970.6 99.2 H978.2 L977.4 106 H968.6 Z" fill="#d8d8d8"/>
<path d="M968.6 106 H977.4 L978.8 107 C977 109 969.6 109 967.6 107.4 Z" fill="#c4c4c4"/>
<path d="M1028.40 65.30 h3.20 l-1.60 1.80 z" fill="#bfbfbf"/>
<path d="M1047.80 84.50 h3.20 l-1.60 1.80 z" fill="#bfbfbf"/>
<path d="M1045.30 103.90 h3.20 l-1.60 1.80 z" fill="#bfbfbf"/>
<path d="M1053.0 126 V121.4 H1057.6" stroke="#c4c4c4" stroke-width="0.9"/>
<path d="M1055.2 123.2 L1058.2 126 M1055.8 126.1 H1058.5 V123.4" stroke="#bcbcbc" stroke-width="0.9"/>
<circle cx="1079.6" cy="64" r="3.9" stroke="#3f5878" stroke-width="1.2"/>
<path d="M1076.8 66.8 L1072.8 70.6" stroke="#4c8ac6" stroke-width="1.7"/>
<path d="M1072.2 86.4 C1072.6 88 1073.6 88.4 1075.2 88.4 M1074 86.8 L1075.8 88.4 L1074 90" stroke="#4c8ac6" stroke-width="0.9"/>
<path d="M1074.8 98.6 V108 L1077.2 106 L1078.8 109.6 L1080.4 108.9 L1078.8 105.4 L1081.8 105.3 Z" fill="#fff" stroke="#555" stroke-width="0.85" stroke-linejoin="round"/>
<path d="M1131.80 84.45 h3.40 l-1.70 1.90 z" fill="#555"/>
<path d="M1117.05 103.85 h3.40 l-1.70 1.90 z" fill="#555"/>
<path d="M1264.4 126.6 L1268.9 122.4 L1273.4 126.6" stroke="#666" stroke-width="1"/>
</svg>

<svg class="layer" viewBox="0 0 1280 720" fill="none">
<!-- spelling / accessibility book -->
<g stroke="#8a8a8a" stroke-width="0.9">
<path d="M66.6 673.2 H72.4 V681.4 H66.6 Z"/>
<path d="M72.4 673.2 H75 M78.2 676.6 V681.4 H72.4"/>
<path d="M77.8 672.6 L79 673.8 L74.8 678.4 L73.4 678.8 L73.8 677.2 Z" fill="#8a8a8a" stroke="none"/>
</g>
<!-- notes -->
<g fill="#c2c2c2">
<path d="M863.2 672.8 L866 676 H860.4 Z"/>
<rect x="859.2" y="676.4" width="8.2" height="5.2"/>
<rect x="860.8" y="674.8" width="6.4" height="1.2" fill="#d0d0d0"/>
</g>
<!-- comments -->
<path d="M912.4 672.2 H923.6 V679.6 H917.2 L914.6 682.2 V679.6 H912.4 Z" fill="#595959"/>
<!-- normal view (selected) -->
<rect x="983.5" y="668" width="33" height="19.5" fill="#c6c6c6"/>
<g stroke="#7a7a7a" stroke-width="0.9">
<rect x="994.2" y="672.4" width="11.4" height="10"/>
<rect x="997.4" y="674.6" width="6" height="4.6" fill="#d6d6d6"/>
<path d="M996 674 V681 M997.4 680.8 H1003.4" stroke-width="0.7"/>
</g>
<!-- slide sorter -->
<g stroke="#8a8a8a" stroke-width="0.9">
<rect x="1027.4" y="672.6" width="4.2" height="3.4"/><rect x="1033.6" y="672.6" width="4.2" height="3.4"/>
<rect x="1027.4" y="678.4" width="4.2" height="3.4"/><rect x="1033.6" y="678.4" width="4.2" height="3.4"/>
</g>
<!-- reading view -->
<g stroke="#8a8a8a" stroke-width="0.9">
<path d="M1066.1 673.4 V681.6 M1060.6 672.8 H1065 L1066.1 673.6 L1067.2 672.8 H1071.6 V680.6 H1067.2 L1066.1 681.4 L1065 680.6 H1060.6 Z"/>
<path d="M1062 675 H1064.4 M1062 676.8 H1064.4 M1062 678.6 H1064.4 M1067.8 675 H1070.2 M1067.8 676.8 H1070.2 M1067.8 678.6 H1070.2" stroke-width="0.6"/>
</g>
<!-- slide show -->
<g stroke="#8a8a8a" stroke-width="0.9">
<path d="M1094.2 672.6 H1105.4" stroke-width="1.1"/>
<path d="M1095.4 673 V678.6 H1104.2 V673"/>
<path d="M1099.8 678.8 V681 M1097.2 681.6 H1102.4"/>
</g>
<!-- zoom slider -->
<g stroke="#a6a6a6" stroke-width="1">
<path d="M1121.4 677.3 H1127.4"/>
<path d="M1131.8 677.3 H1215.4" stroke="#b4b4b4"/>
<path d="M1173.4 674.4 V680.2" stroke="#c6c6c6"/>
<path d="M1219.4 677.3 H1225.4 M1222.4 674.3 V680.3"/>
</g>
<rect x="1165" y="672.6" width="3.6" height="9.4" fill="#6a6a6a"/>
<!-- fit to window -->
<g stroke="#9a9a9a" stroke-width="0.9">
<rect x="1265.6" y="672.8" width="8" height="8.6"/>
<path d="M1267.2 675.8 V674.4 H1268.6 M1270.6 674.4 H1272 V675.8 M1272 678.4 V679.8 H1270.6 M1268.6 679.8 H1267.2 V678.4" stroke="#7a7a7a"/>
</g>
</svg>

<svg class="layer" viewBox="0 0 1280 720" fill="none">
<defs><linearGradient id="brv" x1="0" y1="0" x2="0" y2="1"><stop offset="0" stop-color="#e8391d"/><stop offset="1" stop-color="#f4682c"/></linearGradient></defs>
<!-- active app highlight + underlines -->
<rect x="536" y="687" width="40.4" height="33" fill="#eeeff1"/>
<rect x="536" y="718" width="40.4" height="2" fill="#3087c6"/>
<rect x="291.4" y="718" width="33.6" height="2" fill="#3087c6"/>
<rect x="990.8" y="718" width="33.6" height="2" fill="#3087c6"/>
<!-- start -->
<g fill="#0a0a0a">
<path d="M13.3 698.7 L19 697.9 V702.9 H13.3 Z"/><path d="M19.8 697.8 L26.9 696.8 V702.9 H19.8 Z"/>
<path d="M13.3 703.7 H19 V708.7 L13.3 707.9 Z"/><path d="M19.8 703.7 H26.9 V709.8 L19.8 708.8 Z"/>
</g>
<!-- search -->
<circle cx="62.4" cy="701" r="4.4" stroke="#3a3a3a" stroke-width="1.1"/>
<path d="M59.4 704.2 L53.5 709.4" stroke="#3a3a3a" stroke-width="1.2"/>
<!-- task view -->
<g stroke="#4a4a4a" stroke-width="1">
<rect x="93.6" y="699.8" width="8.8" height="6.2"/>
<path d="M92.6 697.4 H103.4 M92.6 708.6 H103.4 M105.6 696.8 V709.2"/>
<rect x="104.8" y="701.6" width="1.6" height="1.8" fill="#4a4a4a" stroke="none"/>
</g>
<!-- edge -->
<path d="M134.9 703.4 C135.4 698.2 139 695.3 143.4 695.3 C148.4 695.3 151.3 699 151.2 704.6 H140.6 C140.8 707.4 143 708.8 145.8 708.8 C147.8 708.8 149.4 708.3 150.8 707.5 V711 C149.2 711.8 147.4 712.2 145.2 712.2 C140 712.2 136.6 709 136.6 704.4 C136.6 702 137.6 700.2 139.2 699 C136.9 699.8 135.5 701.4 134.9 703.4 Z M140.8 701.8 H146.8 C146.8 699.8 145.6 698.6 143.8 698.6 C142.2 698.6 141.1 699.9 140.8 701.8 Z" fill="#1b79d4" fill-rule="evenodd"/>
<!-- brave -->
<path d="M179.6 693.6 H188.6 L190.2 695.4 L192 695.2 L192.6 697.4 L191.8 699.2 L192.4 701.4 C191.6 706.6 188.4 710.8 184.1 713.4 C179.8 710.8 176.6 706.6 175.8 701.4 L176.4 699.2 L175.6 697.4 L176.2 695.2 L178 695.4 Z" fill="url(#brv)"/>
<path d="M184.1 697 L187.2 696.6 L189.6 699.4 L188.8 702.6 L186.4 705 L186.8 707.2 L184.1 709.4 L181.4 707.2 L181.8 705 L179.4 702.6 L178.6 699.4 L181 696.6 Z" fill="#fdf1ea"/>
<path d="M181.2 700.4 L183 701 L182.6 702.2 Z M187 700.4 L185.2 701 L185.6 702.2 Z M183.2 704.6 H185 L184.1 706.4 Z" fill="#f1562b"/>
<!-- control panel -->
<rect x="216.4" y="697.6" width="17.8" height="11.2" fill="#a5daf6" stroke="#62bdf0" stroke-width="1"/>
<rect x="218.2" y="699.2" width="6.6" height="8" fill="#cfeaf8"/>
<circle cx="221.6" cy="702.2" r="1.7" fill="#f4d36a"/><rect x="220" y="704.6" width="3.4" height="1.8" fill="#3f8fd6"/>
<path d="M226.6 700.2 H232 M226.6 702.6 H232 M226.6 705 H232 M226.6 707 H230" stroke="#6fc0ee" stroke-width="0.9"/>
<!-- cmd -->
<rect x="257.6" y="695.8" width="17" height="13.4" fill="#060606"/>
<rect x="257.6" y="695.8" width="17" height="1.6" fill="#8e8e8e"/>
<path d="M259.4 699.4 H261.4 L262.6 700.8 H266.8" stroke="#d8d8d8" stroke-width="0.8"/>
<!-- file explorer -->
<path d="M298.2 696.2 C298.2 695.6 298.6 695.2 299.2 695.2 H304.6 L306 696.8 H316 C316.8 696.8 317.2 697.2 317.2 698 V709 H298.2 Z" fill="#e9b434"/>
<path d="M298.2 698.4 H317.2 V709.4 C317.2 709.9 316.8 710.3 316.2 710.3 H299.2 C298.6 710.3 298.2 709.9 298.2 709.4 Z" fill="#fbd660"/>
<path d="M301.4 710.3 V704.4 H314 V710.3 H311 V707.2 H304.4 V710.3 Z" fill="#2f8bd3"/>
<!-- chrome -->
<circle cx="349" cy="703" r="9.2" fill="#fff"/>
<path d="M349 703 L341.03 698.4 A9.2 9.2 0 0 1 356.97 698.4 Z" fill="#e2493b"/>
<path d="M349 703 L356.97 698.4 A9.2 9.2 0 0 1 349 712.2 Z" fill="#f9c63c"/>
<path d="M349 703 L349 712.2 A9.2 9.2 0 0 1 341.03 698.4 Z" fill="#3ba55a"/>
<circle cx="349" cy="703" r="4.3" fill="#fff"/>
<circle cx="349" cy="703" r="3.4" fill="#4688f1"/>
<!-- store -->
<path d="M386.6 698.4 C386.6 692.4 394.2 692.4 394.2 698.4" stroke="#0a0a0a" stroke-width="1.4"/>
<rect x="380.8" y="698" width="19.2" height="14.2" fill="#080808"/>
<rect x="386.4" y="701" width="3.7" height="3.7" fill="#f25325"/><rect x="390.7" y="701" width="3.7" height="3.7" fill="#80bb0a"/>
<rect x="386.4" y="705.3" width="3.7" height="3.7" fill="#0aa5ee"/><rect x="390.7" y="705.3" width="3.7" height="3.7" fill="#ffba0a"/>
<!-- mail -->
<path d="M422 700.4 L432 694 L442.2 700.4 V712.4 H422 Z" fill="#1767bf"/>
<path d="M424 699.6 H440.2 V708 H424 Z" fill="#fff"/>
<path d="M422 700.6 L432 707.4 L442.2 700.6 V712.4 H422 Z" fill="#2ea8ea"/>
<path d="M422 712.4 L432 705.6 L442.2 712.4 Z" fill="#4fc0f4"/>
<!-- powerpoint 2010 -->
<rect x="463.6" y="693.8" width="18" height="17.6" rx="1" fill="#fbe4d6" stroke="#f0a27a" stroke-width="1"/>
<path d="M464.4 702 C470 700 476 703 481 698 V710.8 H464.4 Z" fill="#f6c2a0" opacity="0.8"/>
<path d="M467.6 696.6 H472 C476.2 696.6 476.2 702.8 472 702.8 H470 V706.4 H467.6 Z M470 698.6 V700.8 H471.8 C473.4 700.8 473.4 698.6 471.8 698.6 Z" fill="#e2672f" fill-rule="evenodd"/>
<circle cx="476.2" cy="705.6" r="3.6" fill="#fff" stroke="#e58b5e" stroke-width="0.9"/>
<path d="M476.2 705.6 V702.4 A3.2 3.2 0 0 1 479.2 706.6 Z" fill="#e2672f"/>
<!-- word -->
<rect x="509.6" y="694.2" width="14.4" height="17.6" rx="1.2" fill="#123f92"/>
<path d="M509.6 695.4 C509.6 694.7 510.2 694.2 510.8 694.2 H522.8 C523.5 694.2 524 694.7 524 695.4 V698.6 H509.6 Z" fill="#43a6ee"/>
<rect x="509.6" y="698.6" width="14.4" height="4.4" fill="#2c7dd4"/>
<rect x="509.6" y="703" width="14.4" height="4.4" fill="#195bbe"/>
<rect x="504.6" y="698" width="10.6" height="10.2" rx="1" fill="#1a5dbe"/>
<!-- powerpoint (active) -->
<circle cx="557.4" cy="703.2" r="9.2" fill="#ee6d48"/>
<path d="M557.4 694 A9.2 9.2 0 0 1 566.6 703.2 H557.4 Z" fill="#ff9270"/>
<path d="M548.2 703.2 H566.6 A9.2 9.2 0 0 1 548.2 703.2 Z" fill="#d45331"/>
<rect x="546.4" y="698.2" width="10.2" height="10.2" rx="1" fill="#c5401e"/>
<!-- sound recorder -->
<path d="M592.6 697.4 C592.6 692.4 602.6 692.4 602.6 697.4 V706 C602.6 707 602 707.4 601.2 707.4 H594 C593.2 707.4 592.6 707 592.6 706 Z" fill="#8b8b8d"/>
<rect x="592.6" y="698.8" width="10" height="1" fill="#a5a5a7"/>
<circle cx="597.6" cy="703.4" r="1.9" fill="#d6473f"/>
<path d="M594.4 708 C594.4 710 600.8 710 600.8 708 M597.6 709.6 V712.4 M593.6 712.6 H601.6" stroke="#7c7c7e" stroke-width="1"/>
<!-- microphone -->
<rect x="635.2" y="693.4" width="7.6" height="14.4" rx="3.8" fill="#dcdce4" stroke="#a9a9b3" stroke-width="0.8"/>
<rect x="637.4" y="694.6" width="2" height="11" rx="1" fill="#fafafc"/>
<path d="M633.6 701 V704 C633.6 710.4 644.4 710.4 644.4 704 V701 M639 709 V712.6" stroke="#a2a2ac" stroke-width="1"/>
<!-- notepad -->
<path d="M676.6 694.8 L688.4 696.8 L686.8 710.6 L682 709.8 Z" fill="#e2e6ea"/>
<path d="M676.2 694.8 L686.8 696.6 L681.8 709.6 L671 707 Z" fill="#62bbd0"/>
<path d="M676.2 694.8 L686.8 696.6 L686.2 698.2 L675.6 696.4 Z" fill="#8fd3e2"/>
<path d="M671 707 L681.8 709.6 L686.8 710.6 L686.6 711 L681.4 710.6 L670.8 707.6 Z" fill="#9aa4ac"/>
<!-- media player -->
<path d="M712 697 L727.6 696 V711.4 L712 710.6 Z" fill="#419fd8"/>
<path d="M725.4 696.2 L727.6 696 V711.4 L725.4 711.2 Z" fill="#2c7fb8"/>
<circle cx="718.6" cy="703.8" r="4.6" fill="#f18b25" stroke="#fbd2a6" stroke-width="0.8"/>
<path d="M717.2 701.4 L721.4 703.8 L717.2 706.2 Z" fill="#fff"/>
<!-- wordpad-like window -->
<rect x="754.4" y="693.8" width="16.2" height="17" fill="#dfeaf7" stroke="#9db9d8" stroke-width="0.8"/>
<rect x="754.4" y="693.8" width="16.2" height="2.6" fill="#2f70b7"/>
<path d="M757.6 705 L760 698.6 L762.4 705" stroke="#ef8b3c" stroke-width="1.3"/>
<rect x="763.6" y="699" width="4.8" height="3.6" fill="#6ba4de"/>
<path d="M756.6 707.4 H768.4 M756.6 709.2 H766" stroke="#b9cde4" stroke-width="0.8"/>
<!-- paint -->
<path d="M804 696 C810.8 695.4 814.6 700 813.4 705 C812.2 710 806.4 712.6 801 712.2 C797 711.8 794.6 709.6 795 706.4 C795.4 703.6 798 704.4 798.6 702.2 C799.4 699.2 800 696.6 804 696 Z" fill="#bfd0e4" stroke="#9db2cc" stroke-width="0.7"/>
<circle cx="800.6" cy="700.4" r="1.3" fill="#e45b4a"/><circle cx="804.6" cy="698.6" r="1.3" fill="#f2c335"/><circle cx="808.8" cy="699.8" r="1.3" fill="#58b25a"/><circle cx="799.4" cy="707.6" r="1.3" fill="#4a86d6"/>
<path d="M811.6 693.6 L813.4 694.4 L806.6 707.4 L804.8 706.4 Z" fill="#d98642"/>
<path d="M804.8 706.4 L806.6 707.4 L804.2 711.6 L803 711 Z" fill="#8a5a34"/>
<!-- calculator -->
<rect x="837.4" y="693.4" width="14.8" height="19.6" rx="1" fill="#444446"/>
<rect x="839.2" y="695.6" width="11.2" height="3.6" fill="#f4f4f4"/>
<g fill="#eaeaea">
<rect x="839.4" y="701.4" width="2.6" height="2.4"/><rect x="843.5" y="701.4" width="2.6" height="2.4"/><rect x="847.6" y="701.4" width="2.6" height="2.4"/>
<rect x="839.4" y="705.2" width="2.6" height="2.4"/><rect x="843.5" y="705.2" width="2.6" height="2.4"/><rect x="847.6" y="705.2" width="2.6" height="2.4"/>
<rect x="839.4" y="709" width="2.6" height="2.4"/><rect x="843.5" y="709" width="2.6" height="2.4"/><rect x="847.6" y="709" width="2.6" height="2.4"/>
</g>
<!-- blue window -->
<rect x="876.2" y="696.4" width="18.6" height="14.4" fill="#f4f4f4" stroke="#c4c4c6" stroke-width="1"/>
<rect x="876.2" y="696.4" width="18.6" height="1.8" fill="#c9c9cb"/>
<rect x="880.6" y="698.8" width="8.6" height="9.8" fill="#1f79d2"/>
<rect x="890" y="699.6" width="3.6" height="8.4" fill="#dcdcde"/><rect x="877.4" y="699.6" width="2.4" height="8.4" fill="#e6e6e8"/>
<!-- blue chat app -->
<rect x="916.2" y="693" width="19.6" height="20" rx="3" fill="#1f8ff0"/>
<path d="M920 701.4 C920 696.6 932 696.6 932 701.4 C932 705 927.6 706 925.4 705.8 L922.4 708.6 L922.8 705.2 C921 704.4 920 703 920 701.4 Z" fill="#fff"/>
<path d="M924.6 703 C924.6 700.6 925.8 699.8 928 699.8 V701.2 C926.8 701.2 926.2 701.6 926.2 703 Z" fill="#1f8ff0"/>
<!-- obs -->
<circle cx="966.7" cy="702.7" r="8.6" fill="#1d1d1f"/>
<g stroke="#d6d6d6" stroke-width="1.1">
<path d="M966.7 696.4 C970.2 696.8 971 700.6 968.6 702.4"/>
<path d="M972.4 705.8 C970.4 708.8 966.6 707.8 966 704.8"/>
<path d="M961 705.2 C959.6 702 962.4 699.4 965.2 700.4"/>
</g>
<!-- camtasia -->
<rect x="997.4" y="693" width="19.8" height="20" rx="2.4" fill="#f15b3e"/>
<path d="M997.4 703 H1017.2 V710.6 C1017.2 712 1016.2 713 1014.8 713 H999.8 C998.4 713 997.4 712 997.4 710.6 Z" fill="#f47650" opacity="0.7"/>
<path d="M1012.8 696.4 H1004.4 C1002.4 696.4 1001.2 697.6 1001.2 699.6 V706.4 C1001.2 708.4 1002.4 709.6 1004.4 709.6 H1012.8 V707.2 H1005.4 C1004.4 707.2 1004 706.8 1004 705.8 V700.2 C1004 699.2 1004.4 698.8 1005.4 698.8 H1012.8 Z" fill="#fff"/>
<!-- tray chevron -->
<path d="M1035 706 L1040.2 701 L1045.4 706" stroke="#444" stroke-width="1"/>
<rect x="1275" y="687" width="1" height="33" fill="#cfd0d3"/>
<!-- mic -->
<rect x="1057.2" y="696.8" width="4.8" height="8.6" rx="1.6" fill="#0c0c0c"/>
<path d="M1055.6 702.6 C1055.6 708.4 1063.6 708.4 1063.6 702.6 M1059.6 707 V709 M1057.2 709.2 H1062" stroke="#333" stroke-width="0.9"/>
<!-- bluetooth -->
<ellipse cx="1079.8" cy="703" rx="5.2" ry="7" fill="#1e86e8"/>
<path d="M1077.4 700.6 L1082 705 L1079.8 707 V699 L1082 701 L1077.4 705.4" stroke="#fff" stroke-width="0.9"/>
<!-- battery / power -->
<g stroke="#3a3a3a" stroke-width="0.9">
<rect x="1095.8" y="700.4" width="10.4" height="6.4"/>
<path d="M1095.6 702.2 H1094.2 V704.8 H1095.6"/>
<path d="M1093.6 699.2 L1096.4 700.4" />
</g>
<!-- wifi -->
<g stroke="#5a5a5a" stroke-width="0.9">
<path d="M1116 708.6 C1116 703.4 1119.4 699.8 1124.6 699.6"/>
<path d="M1118.6 708.6 C1118.6 705 1121 702.4 1124.6 702.2"/>
<path d="M1121.2 708.6 C1121.2 706.4 1122.6 705 1124.6 704.8"/>
</g>
<circle cx="1124.2" cy="708.2" r="0.9" fill="#333"/>
<!-- volume -->
<g stroke="#3a3a3a" stroke-width="0.9">
<path d="M1133.4 701.4 H1135.6 L1138.4 698.6 V708.2 L1135.6 705.4 H1133.4 Z"/>
<path d="M1140.4 701.6 C1141.4 702.6 1141.4 704.2 1140.4 705.2 M1142.4 699.8 C1144.4 701.8 1144.4 705 1142.4 707 M1144.4 698.2 C1147.4 701 1147.4 705.8 1144.4 708.6"/>
</g>
<!-- notifications -->
<path d="M1246 696.8 H1259.2 V705.6 H1250.6 L1248 708 V705.6 H1246 Z" fill="#0a0a0a"/>
<path d="M1247.8 699.2 H1257.4 M1247.8 701.2 H1257.4 M1247.8 703.2 H1257.4" stroke="#dfe0e3" stroke-width="0.7"/>
<circle cx="1258.8" cy="709.6" r="6" fill="#dfe0e3" stroke="#555" stroke-width="0.8"/>
</svg>


<!-- ============ text ============ -->
<div class="t " style="left:578.00px;top:9.00px;font-size:10px;letter-spacing:-0.144px;color:#fff;">Presentation1  -  PowerPoint</div>
<div class="t " style="left:17.00px;top:37.00px;font-size:10px;letter-spacing:-0.280px;color:#fff;transform:scaleX(0.9814);transform-origin:0 0;">File</div>
<div class="t " style="left:59.00px;top:37.00px;font-size:10px;letter-spacing:-0.229px;color:#a9553f;">Home</div>
<div class="t " style="left:103.50px;top:37.00px;font-size:10px;letter-spacing:-0.103px;color:#fff;">Insert</div>
<div class="t " style="left:146.00px;top:37.00px;font-size:10px;letter-spacing:-0.128px;color:#fff;">Design</div>
<div class="t " style="left:195.00px;top:37.00px;font-size:10px;letter-spacing:-0.205px;color:#fff;">Transitions</div>
<div class="t " style="left:259.50px;top:37.00px;font-size:10px;letter-spacing:0.059px;color:#fff;">Animations</div>
<div class="t " style="left:327.50px;top:37.00px;font-size:10px;letter-spacing:-0.170px;color:#fff;">Slide Show</div>
<div class="t " style="left:394.00px;top:37.00px;font-size:10px;letter-spacing:-0.259px;color:#fff;">Review</div>
<div class="t " style="left:443.50px;top:37.00px;font-size:10px;letter-spacing:-0.167px;color:#fff;">View</div>
<div class="t " style="left:482.50px;top:37.00px;font-size:10px;letter-spacing:0.182px;color:#fff;">Add-ins</div>
<div class="t " style="left:535.50px;top:37.00px;font-size:10px;letter-spacing:-0.026px;color:#fff;">Help</div>
<div class="t " style="left:599.40px;top:37.00px;font-size:10px;letter-spacing:0.084px;color:#fff;">Tell me what you want to do</div>
<div class="t " style="left:1236.90px;top:38.00px;font-size:10px;letter-spacing:-0.280px;color:#fff;transform:scaleX(0.9524);transform-origin:0 0;">Share</div>
<div class="t " style="left:13.00px;top:90.00px;font-size:10px;letter-spacing:-0.280px;color:#b6b6b6;transform:scaleX(0.8995);transform-origin:0 0;">Paste</div>
<div class="t " style="left:60.00px;top:62.00px;font-size:10px;letter-spacing:-0.280px;color:#b6b6b6;transform:scaleX(0.9332);transform-origin:0 0;">Cut</div>
<div class="t " style="left:60.00px;top:81.00px;font-size:10px;letter-spacing:-0.280px;color:#b6b6b6;transform:scaleX(0.9769);transform-origin:0 0;">Copy</div>
<div class="t " style="left:60.00px;top:101.00px;font-size:10px;letter-spacing:-0.242px;color:#b6b6b6;">Format Painter</div>
<div class="t " style="left:41.50px;top:119.00px;font-size:9.5px;letter-spacing:-0.271px;color:#555;">Clipboard</div>
<div class="t " style="left:150.60px;top:90.00px;font-size:10px;letter-spacing:-0.008px;color:#4a4a4a;">New</div>
<div class="t " style="left:146.25px;top:103.00px;font-size:10px;letter-spacing:-0.125px;color:#4a4a4a;">Slide</div>
<div class="t " style="left:196.90px;top:62.00px;font-size:10px;letter-spacing:-0.266px;color:#4a4a4a;">Layout</div>
<div class="t " style="left:197.00px;top:81.00px;font-size:10px;letter-spacing:-0.280px;color:#4a4a4a;transform:scaleX(0.9398);transform-origin:0 0;">Reset</div>
<div class="t " style="left:197.00px;top:101.00px;font-size:10px;letter-spacing:-0.227px;color:#4a4a4a;">Section</div>
<div class="t " style="left:180.60px;top:119.00px;font-size:9.5px;letter-spacing:-0.280px;color:#555;transform:scaleX(0.9152);transform-origin:0 0;">Slides</div>
<div class="t " style="left:346.25px;top:119.00px;font-size:9.5px;letter-spacing:-0.280px;color:#555;transform:scaleX(0.8941);transform-origin:0 0;">Font</div>
<div class="t " style="left:594.00px;top:119.00px;font-size:9.5px;letter-spacing:-0.280px;color:#555;transform:scaleX(0.9588);transform-origin:0 0;">Paragraph</div>
<div class="t " style="left:661.90px;top:62.00px;font-size:10px;letter-spacing:0.002px;color:#b6b6b6;">Text Direction</div>
<div class="t " style="left:661.90px;top:81.00px;font-size:10px;letter-spacing:-0.010px;color:#b6b6b6;">Align Text</div>
<div class="t " style="left:661.90px;top:101.00px;font-size:10px;letter-spacing:-0.070px;color:#b6b6b6;">Convert to SmartArt</div>
<div class="t " style="left:891.90px;top:90.00px;font-size:10px;letter-spacing:-0.205px;color:#4a4a4a;">Arrange</div>
<div class="t " style="left:892.25px;top:119.00px;font-size:9.5px;letter-spacing:-0.280px;color:#555;transform:scaleX(0.9494);transform-origin:0 0;">Drawing</div>
<div class="t " style="left:934.00px;top:90.00px;font-size:10px;letter-spacing:-0.266px;color:#b6b6b6;">Quick</div>
<div class="t " style="left:930.60px;top:104.00px;font-size:10px;letter-spacing:-0.280px;color:#b6b6b6;transform:scaleX(0.9677);transform-origin:0 0;">Styles</div>
<div class="t " style="left:982.90px;top:62.00px;font-size:10px;letter-spacing:-0.263px;color:#b6b6b6;">Shape Fill</div>
<div class="t " style="left:982.90px;top:81.00px;font-size:10px;letter-spacing:-0.158px;color:#b6b6b6;">Shape Outline</div>
<div class="t " style="left:982.90px;top:101.00px;font-size:10px;letter-spacing:-0.258px;color:#b6b6b6;">Shape Effects</div>
<div class="t " style="left:1087.90px;top:62.00px;font-size:10px;letter-spacing:-0.280px;color:#4a4a4a;transform:scaleX(0.9321);transform-origin:0 0;">Find</div>
<div class="t " style="left:1087.90px;top:81.00px;font-size:10px;letter-spacing:-0.280px;color:#4a4a4a;transform:scaleX(0.9879);transform-origin:0 0;">Replace</div>
<div class="t " style="left:1087.90px;top:101.00px;font-size:10px;letter-spacing:-0.280px;color:#4a4a4a;transform:scaleX(0.9793);transform-origin:0 0;">Select</div>
<div class="t " style="left:1090.25px;top:119.00px;font-size:9.5px;letter-spacing:-0.280px;color:#555;transform:scaleX(0.9495);transform-origin:0 0;">Editing</div>
<div class="t " style="left:260.60px;top:93.00px;font-size:10.5px;letter-spacing:0.000px;color:#b6b6b6;font-weight:700;">B</div>
<div class="t " style="left:281.00px;top:94.00px;font-size:10.5px;letter-spacing:0.000px;color:#b6b6b6;font-family:'Liberation Serif', serif;font-style:italic;">I</div>
<div class="t " style="left:298.00px;top:94.00px;font-size:10px;letter-spacing:0.000px;color:#b6b6b6;">U</div>
<div class="t " style="left:317.50px;top:93.00px;font-size:10.5px;letter-spacing:0.000px;color:#b6b6b6;font-weight:700;">S</div>
<div class="t " style="left:332.50px;top:95.00px;font-size:8.5px;letter-spacing:-0.109px;color:#b6b6b6;">abc</div>
<div class="t " style="left:352.50px;top:93.00px;font-size:9px;letter-spacing:-0.094px;color:#b6b6b6;">AV</div>
<div class="t " style="left:380.25px;top:94.00px;font-size:10px;letter-spacing:-0.280px;color:#b6b6b6;transform:scaleX(0.9829);transform-origin:0 0;">Aa</div>
<div class="t " style="left:412.00px;top:69.00px;font-size:10px;letter-spacing:0.000px;color:#b6b6b6;">A</div>
<div class="t " style="left:430.40px;top:68.00px;font-size:9.5px;letter-spacing:0.000px;color:#b6b6b6;">A</div>
<div class="t " style="left:444.75px;top:91.00px;font-size:12px;letter-spacing:0.000px;color:#b6b6b6;">A</div>
<div class="t " style="left:6.00px;top:673.00px;font-size:9.5px;letter-spacing:-0.280px;color:#555;transform:scaleX(0.9726);transform-origin:0 0;">Slide 1 of 1</div>
<div class="t " style="left:93.00px;top:673.00px;font-size:9.5px;letter-spacing:-0.280px;color:#555;transform:scaleX(0.9626);transform-origin:0 0;">Arabic (Jordan)</div>
<div class="t " style="left:872.00px;top:673.00px;font-size:9.5px;letter-spacing:-0.280px;color:#555;transform:scaleX(0.9828);transform-origin:0 0;">Notes</div>
<div class="t " style="left:926.50px;top:673.00px;font-size:9.5px;letter-spacing:-0.280px;color:#555;transform:scaleX(0.9255);transform-origin:0 0;">Comments</div>
<div class="t " style="left:1236.90px;top:673.00px;font-size:9.5px;letter-spacing:-0.280px;color:#555;transform:scaleX(0.8724);transform-origin:0 0;">83%</div>
<div class="t " style="left:1155.70px;top:700.00px;font-size:10px;letter-spacing:-0.280px;color:#3a3a3a;transform:scaleX(0.8668);transform-origin:0 0;">ENG</div>
<div class="t " style="left:1190.70px;top:692.00px;font-size:10px;letter-spacing:-0.280px;color:#3a3a3a;transform:scaleX(0.9851);transform-origin:0 0;">3:37 AM</div>
<div class="t " style="left:1185.70px;top:707.00px;font-size:10px;letter-spacing:0.000px;color:#3a3a3a;">5/12/2020</div>
<div class="t " style="left:1256.60px;top:706.00px;font-size:9px;letter-spacing:0.000px;color:#333;">1</div>
<div class="t " style="left:11.20px;top:146.00px;font-size:11px;letter-spacing:0.000px;color:#c98a84;">1</div>
<div class="grp" id="ph-title"><span class="t " style="left:563.98px;top:350.00px;font-size:52.5px;letter-spacing:0.000px;color:#111;-webkit-text-stroke:1.3px #fff;transform:scaleX(0.8769);transform-origin:0 0;">Click</span> <span class="t " style="left:677.95px;top:350.00px;font-size:52.5px;letter-spacing:2.614px;color:#111;-webkit-text-stroke:1.3px #fff;">to</span> <span class="t " style="left:736.10px;top:350.00px;font-size:52.5px;letter-spacing:0.000px;color:#111;-webkit-text-stroke:1.3px #fff;transform:scaleX(0.9446);transform-origin:0 0;">add</span> <span class="t " style="left:831.65px;top:350.00px;font-size:52.5px;letter-spacing:1.550px;color:#111;-webkit-text-stroke:1.3px #fff;">title</span></div>
<div class="grp" id="ph-subtitle"><span class="t " style="left:654.40px;top:425.00px;font-size:18.6px;letter-spacing:0.000px;color:#222;transform:scaleX(0.9515);transform-origin:0 0;">Click</span> <span class="t " style="left:699.70px;top:425.00px;font-size:18.6px;letter-spacing:2.334px;color:#222;">to</span> <span class="t " style="left:723.90px;top:425.00px;font-size:18.6px;letter-spacing:0.000px;color:#222;transform:scaleX(0.9941);transform-origin:0 0;">add</span> <span class="t " style="left:762.50px;top:425.00px;font-size:18.6px;letter-spacing:1.004px;color:#222;">subtitle</span></div>
<div class="t " style="left:453.60px;top:66.00px;font-size:9px;letter-spacing:0.000px;color:#b6b6b6;">A</div>
<div class="t " style="left:413.80px;top:92.00px;font-size:6.5px;letter-spacing:-0.280px;color:#b6b6b6;transform:scaleX(0.9778);transform-origin:0 0;">ab</div>
<div class="t " style="left:579.20px;top:94.00px;font-size:7.5px;letter-spacing:0.000px;color:#b6b6b6;">¶</div>
<div class="t " style="left:594.40px;top:94.00px;font-size:7.5px;letter-spacing:0.000px;color:#b6b6b6;">¶</div>
<div class="t " style="left:652.20px;top:58.00px;font-size:7.5px;letter-spacing:0.000px;color:#b6b6b6;">A</div>
<div class="t " style="left:780.20px;top:65.00px;font-size:5.5px;letter-spacing:0.000px;color:#4b4b7a;font-weight:700;">A</div>
<div class="t " style="left:1072.20px;top:79.00px;font-size:7.5px;letter-spacing:-0.280px;color:#555;transform:scaleX(0.9673);transform-origin:0 0;">ab</div>
<div class="t " style="left:1077.20px;top:85.00px;font-size:7px;letter-spacing:-0.280px;color:#6f86a8;transform:scaleX(0.9542);transform-origin:0 0;">ac</div>
<div class="t " style="left:506.20px;top:700.00px;font-size:7.5px;letter-spacing:0.000px;color:#fff;font-weight:700;">W</div>
<div class="t " style="left:549.20px;top:700.00px;font-size:7.5px;letter-spacing:0.000px;color:#fff;font-weight:700;">P</div>

</div>
</body>
</html>
